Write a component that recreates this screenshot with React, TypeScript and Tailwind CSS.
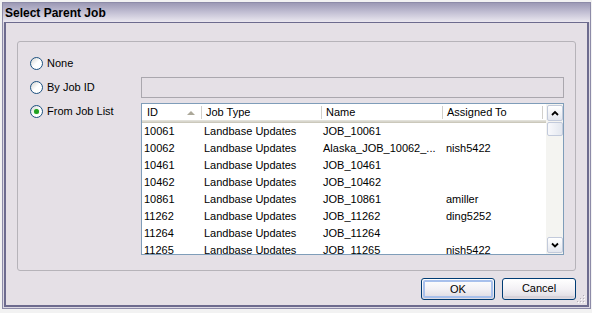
import React from "react";

const rows: [string, string, string, string][] = [
  ["10061", "Landbase Updates", "JOB_10061", ""],
  ["10062", "Landbase Updates", "Alaska_JOB_10062_...", "nish5422"],
  ["10461", "Landbase Updates", "JOB_10461", ""],
  ["10462", "Landbase Updates", "JOB_10462", ""],
  ["10861", "Landbase Updates", "JOB_10861", "amiller"],
  ["11262", "Landbase Updates", "JOB_11262", "ding5252"],
  ["11264", "Landbase Updates", "JOB_11264", ""],
  ["11265", "Landbase Updates", "JOB_11265", "nish5422"],
];

function Radio({ checked }: { checked?: boolean }) {
  return (
    <span className="inline-flex w-[13px] h-[13px] shrink-0 rounded-full border border-[#1c5180] bg-gradient-to-br from-[#d4d4d0] via-white to-white items-center justify-center">
      {checked && <span className="w-[5px] h-[5px] rounded-full bg-[#21a121] shadow-[0_0_1px_#6fd56f]" />}
    </span>
  );
}

function Sep() {
  return <span className="w-[2px] h-[13px] shrink-0 border-l border-[#d2d0cb] border-r border-r-white" />;
}

function ScrollBtn({ up }: { up?: boolean }) {
  return (
    <div className="w-[16px] h-[16px] rounded-[2px] border border-[#c2cadb] bg-gradient-to-b from-white to-[#e4e7ef] flex items-center justify-center">
      <svg width="8" height="6" viewBox="0 0 8 6">
        <path
          d={up ? "M1 5 L4 2 L7 5" : "M1 1.5 L4 4.5 L7 1.5"}
          fill="none"
          stroke="#000"
          strokeWidth="1.8"
        />
      </svg>
    </div>
  );
}

function Button({ children, focused }: { children: React.ReactNode; focused?: boolean }) {
  return (
    <div className="w-[74px] h-[22px] rounded-[3px] border border-[#003c74] bg-gradient-to-b from-white via-[#f3f1f5] to-[#dcd8e0] p-px">
      <div
        className={
          focused
            ? "w-full h-full rounded-[2px] border-2 border-[#a8c0ec] flex items-center justify-center text-black"
            : "w-full h-full rounded-[2px] border-b-2 border-[#d6d2da] flex items-center justify-center text-black"
        }
      >
        {children}
      </div>
    </div>
  );
}

export default function App() {
  return (
    <div
      className="w-[592px] h-[313px] bg-[#f2f2f2] overflow-hidden pt-[2px] pl-[2px] text-[11px] text-black"
      style={{ fontFamily: '"Liberation Sans", Arial, sans-serif' }}
    >
      <div className="w-[589px] h-[307px] border border-[#8d8ba8] bg-[#dcd9e4] flex flex-col">
        <div className="h-[19px] shrink-0 bg-gradient-to-b from-[#9c99b5] via-[#c3c0d4] to-[#ebe8f0] flex items-center pl-[2px]">
          <span className="font-bold text-[12px] leading-none">Select Parent Job</span>
        </div>
        <div className="relative mx-px mb-px flex-1 border-2 border-t border-[#6d6b8e] bg-[#e5e0e6] px-[11px] pt-[18px] flex flex-col">
          <div className="rounded-[3px] border border-[#b6b3b9] pt-[9px] pb-[15px] pr-[11px] flex flex-col">
            <div className="h-[24px] flex items-center pl-[12px] gap-[4px]">
              <Radio />
              <span>None</span>
            </div>
            <div className="mt-[2px] h-[21px] flex items-center">
              <div className="w-[123px] shrink-0 flex items-center pl-[12px] gap-[4px]">
                <Radio />
                <span>By Job ID</span>
              </div>
              <div className="flex-1 h-full border border-[#aaa7ae]" />
            </div>
            <div className="mt-[5px] flex">
              <div className="w-[123px] shrink-0 h-[16px] flex items-center pl-[12px] gap-[4px]">
                <Radio checked />
                <span>From Job List</span>
              </div>
              <div className="flex-1 h-[152px] border border-[#7f9db9] bg-white flex overflow-hidden">
                <div className="flex-1 flex flex-col min-w-0">
                  <div className="h-[19px] shrink-0 flex flex-col">
                    <div className="h-[16px] flex items-center bg-white">
                      <div className="w-[59px] flex items-center pl-[5px] pr-[6px]">
                        <span className="flex-1">ID</span>
                        <svg width="8" height="5" viewBox="0 0 8 5">
                          <path d="M0 5 L4 1 L8 5 Z" fill="#aca899" />
                        </svg>
                      </div>
                      <Sep />
                      <div className="w-[118px] pl-[3px]">Job Type</div>
                      <Sep />
                      <div className="w-[119px] pl-[3px]">Name</div>
                      <Sep />
                      <div className="w-[98px] pl-[3px]">Assigned To</div>
                      <Sep />
                    </div>
                    <div className="h-px bg-[#e2e1da]" />
                    <div className="h-px bg-[#d8d6cd]" />
                    <div className="h-px bg-[#cbc8bb]" />
                  </div>
                  {rows.map((r) => (
                    <div key={r[0]} className="h-[17px] shrink-0 flex items-center whitespace-nowrap">
                      <div className="w-[59px] pl-[2px]">{r[0]}</div>
                      <div className="w-[120px] pl-[3px]">{r[1]}</div>
                      <div className="w-[121px] pl-[2px]">{r[2]}</div>
                      <div className="w-[100px] pl-[4px]">{r[3]}</div>
                    </div>
                  ))}
                </div>
                <div className="w-[17px] shrink-0 bg-[#f4f4f1] flex flex-col py-px pl-[1px]">
                  <ScrollBtn up />
                  <div className="w-[16px] h-[14px] mt-px rounded-[2px] border border-[#c2cadb] bg-gradient-to-r from-[#f8f9fc] to-[#e3e7ef]" />
                  <div className="flex-1" />
                  <ScrollBtn />
                </div>
              </div>
            </div>
          </div>
          <div className="mt-[7px] flex justify-end gap-[7px]">
            <Button focused>OK</Button>
            <Button>Cancel</Button>
          </div>
          <svg className="absolute right-[1px] bottom-[1px]" width="10" height="10" viewBox="0 0 10 10">
            {[
              [8, 2],
              [8, 5],
              [5, 5],
              [8, 8],
              [5, 8],
              [2, 8],
            ].map(([x, y]) => (
              <g key={`${x}-${y}`}>
                <rect x={x} y={y} width="1" height="1" fill="#ffffff" />
                <rect x={x - 1} y={y - 1} width="1" height="1" fill="#b3afb8" />
              </g>
            ))}
          </svg>
        </div>
      </div>
    </div>
  );
}
